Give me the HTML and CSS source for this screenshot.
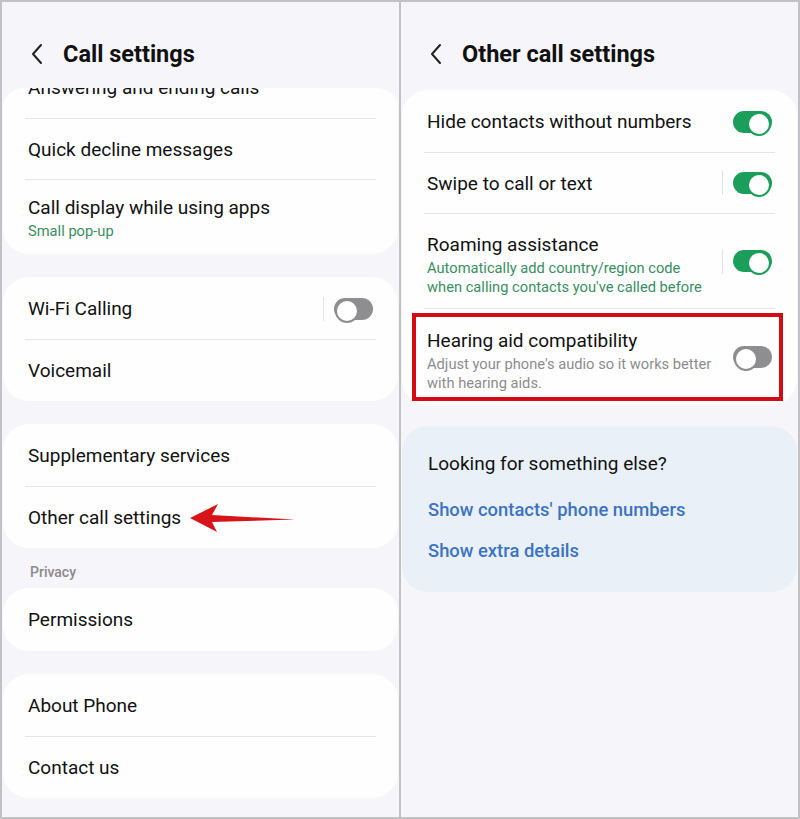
FILE: index.html
```html
<!DOCTYPE html>
<html lang="en">

<head>
    <meta charset="UTF-8"/>
    <title>Call settings</title>
    <link rel="stylesheet" href="styles.css">
</head>

<body>
<div class="frame">
    <!-- left screen -->
    <div class="panel">
        <div class="header">
            <svg class="back" width="14" height="22" viewBox="0 0 14 22">
                <path d="M11 2 L3 11 L11 20" fill="none" stroke="#222" stroke-width="2" stroke-linecap="round" stroke-linejoin="round"/>
            </svg>
            <h1>Call settings</h1>
        </div>
        <div class="scroll">
            <div class="card first">
                <div class="row">Answering and ending calls</div>
                <div class="row">Quick decline messages</div>
                <div class="row tall">
                    <div class="label">Call display while using apps</div>
                    <div class="sub green">Small pop-up</div>
                </div>
            </div>

            <div class="card">
                <div class="row">
                    <div class="label">Wi-Fi Calling</div>
                    <span class="sep"></span>
                    <span class="switch"></span>
                </div>
                <div class="row">Voicemail</div>
            </div>

            <div class="card">
                <div class="row">Supplementary services</div>
                <div class="row arrow-row">
                    Other call settings
                    <svg class="arrow" width="106" height="28" viewBox="0 0 106 28">
                        <polygon points="0,14 28,0 22,11 105,15.5 22,18 27,28" fill="#d7141a"/>
                    </svg>
                </div>
            </div>

            <div class="group-title">Privacy</div>
            <div class="card">
                <div class="row">Permissions</div>
            </div>

            <div class="card">
                <div class="row">About Phone</div>
                <div class="row">Contact us</div>
            </div>
        </div>
    </div>

    <!-- right screen -->
    <div class="panel">
        <div class="header">
            <svg class="back" width="14" height="22" viewBox="0 0 14 22">
                <path d="M11 2 L3 11 L11 20" fill="none" stroke="#222" stroke-width="2" stroke-linecap="round" stroke-linejoin="round"/>
            </svg>
            <h1>Other call settings</h1>
        </div>
        <div class="card top">
            <div class="row">
                <div class="label">Hide contacts without numbers</div>
                <span class="switch on"></span>
            </div>
            <div class="row">
                <div class="label">Swipe to call or text</div>
                <span class="sep"></span>
                <span class="switch on"></span>
            </div>
            <div class="row big">
                <div class="text">
                    <div class="label">Roaming assistance</div>
                    <div class="sub green">Automatically add country/region code<br>when calling contacts you've called before</div>
                </div>
                <span class="sep"></span>
                <span class="switch on"></span>
            </div>
            <div class="row big marked">
                <div class="text">
                    <div class="label">Hearing aid compatibility</div>
                    <div class="sub grey">Adjust your phone's audio so it works better<br>with hearing aids.</div>
                </div>
                <span class="switch"></span>
                <span class="highlight"></span>
            </div>
        </div>

        <div class="card suggest">
            <div class="suggest-title">Looking for something else?</div>
            <a href="javascript:" class="link">Show contacts' phone numbers</a>
            <a href="javascript:" class="link">Show extra details</a>
        </div>
    </div>
</div>
</body>

</html>
```

FILE: styles.css
```css
* {
    margin: 0;
    padding: 0;
    box-sizing: border-box;
}

body {
    font-family: Roboto, "Liberation Sans", sans-serif;
    color: #111;
    background: #fff;
}

.frame {
    width: 800px;
    height: 819px;
    display: flex;
    gap: 2px;
    border: 2px solid #c2c2c4;
    background: #c2c2c4;
    overflow: hidden;
}

.panel {
    flex: 1;
    background: #f6f5f9;
    display: flex;
    flex-direction: column;
    overflow: hidden;
}

.header {
    height: 86px;
    flex-shrink: 0;
    display: flex;
    align-items: center;
    padding: 18px 0 0 28px;
}

.back {
    margin-right: 19px;
}

.header h1 {
    font-size: 23.5px;
    font-weight: 700;
    color: #111;
}

.scroll {
    flex: 1;
    overflow: hidden;
    border-radius: 22px 22px 0 0;
}

.card {
    background: #fefefe;
    border-radius: 26px;
    margin: 0 1px 23px;
    padding: 1px 22px;
}

.card.first {
    margin-top: -32px;
    border-radius: 0 0 26px 26px;
}

.card.top {
    margin-top: 2px;
    margin-bottom: 21px;
}

.row {
    position: relative;
    display: flex;
    align-items: center;
    min-height: 61px;
    padding: 0 3px;
    font-size: 19px;
    border-top: 1px solid #e6e6e8;
}

.row:first-child {
    border-top: 0;
}

.row .label,
.row .text {
    flex: 1;
}

.row.tall {
    flex-direction: column;
    align-items: flex-start;
    justify-content: center;
    min-height: 74px;
    padding-top: 4px;
}

.row.tall .label {
    flex: none;
}

.row.big {
    min-height: 95px;
    padding-top: 8px;
}

.row.marked {
    min-height: 96px;
}

.sub {
    font-size: 14.7px;
    line-height: 19px;
    margin-top: 3px;
}

.green {
    color: #3a8d62;
}

.grey {
    color: #8c8c8e;
}

.sep {
    width: 1px;
    height: 24px;
    background: #e2e2e4;
    margin-right: 10px;
}

.switch {
    position: relative;
    width: 39px;
    height: 22px;
    border-radius: 11px;
    background: #8e8e90;
    flex-shrink: 0;
}

.row.big .switch,
.row.big .sep {
    margin-top: -8px;
}

.row.big .sep {
    margin-top: -6px;
}

.switch::after {
    content: "";
    position: absolute;
    left: 1px;
    top: 1px;
    width: 20px;
    height: 20px;
    border-radius: 50%;
    background: #fff;
    border: 2px solid #8e8e90;
}

.switch.on {
    background: #1a9e5a;
}

.switch.on::after {
    left: auto;
    right: 1px;
    border-color: #1a9e5a;
}

.arrow {
    position: absolute;
    left: 165px;
    top: 17px;
}

.highlight {
    position: absolute;
    left: -12px;
    top: 4px;
    width: 371px;
    height: 88px;
    border: 4px solid #d40a14;
}

.group-title {
    font-size: 14px;
    font-weight: 500;
    color: #8a8a8c;
    padding: 0 0 0 28px;
    margin: -7px 0 8px;
}

.suggest {
    background: #e9f0f8;
    margin: 0 1px;
    padding: 26px 26px 24px;
    border-radius: 26px;
    height: 166px;
}

.suggest-title {
    font-size: 19px;
    margin-bottom: 24px;
}

.link {
    display: block;
    font-size: 18.4px;
    font-weight: 500;
    color: #3d73c2;
    text-decoration: none;
    margin-bottom: 20px;
}
```
